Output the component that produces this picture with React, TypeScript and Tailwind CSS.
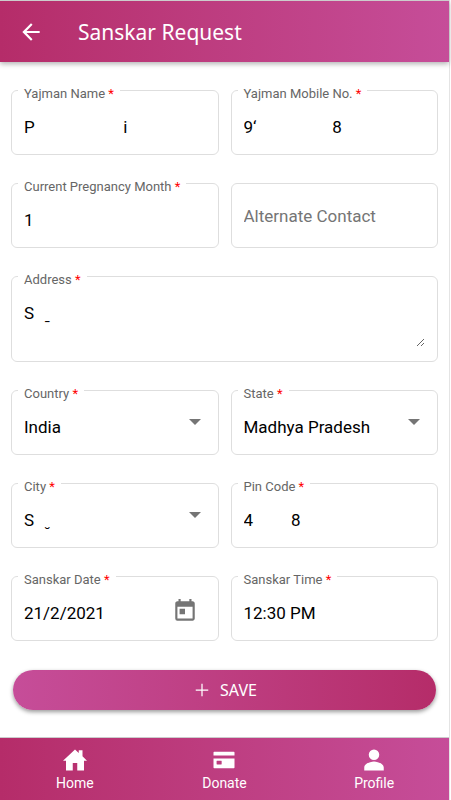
import React, { useState } from 'react';
import { IoAddSharp, IoCardSharp, IoHomeSharp, IoPersonSharp } from 'react-icons/io5';
import { MdArrowBack, MdToday } from 'react-icons/md';

interface FieldProps {
    id: string;
    label: string;
    children: React.ReactNode;
    className?: string;
}

const controlClass = 'block w-full min-w-0 bg-transparent text-[17px] leading-6 text-black outline-none';

// Keeps the blanked-out part of a value as wide as the hidden characters
const blank = (count: number) => '\u00a0'.repeat(count);

const Field: React.FC<FieldProps> = ({ id, label, children, className = 'h-[77px]' }) => (
    <fieldset className={`min-w-0 rounded-md border border-[#dedede] px-3 ${className}`}>
        <legend className="ml-[-6px] px-[6px] pt-2 text-[13px] leading-4 text-[#666]">
            <label htmlFor={id}>
                {label} <span className="text-[#f00]">*</span>
            </label>
        </legend>
        {children}
    </fieldset>
);

interface TextFieldProps {
    id: string;
    label: string;
    initial: string;
}

const TextField: React.FC<TextFieldProps> = ({ id, label, initial }) => {
    const [value, setValue] = useState(initial);

    return (
        <Field id={id} label={label}>
            <input
                id={id}
                type="text"
                value={value}
                onChange={(e) => setValue(e.target.value)}
                className={`${controlClass} mt-[13px]`}
            />
        </Field>
    );
};

const SelectField: React.FC<TextFieldProps> = ({ id, label, initial }) => (
    <Field id={id} label={label}>
        <div className="mt-[13px] grid items-start">
            <select
                id={id}
                defaultValue={initial}
                className={`${controlClass} col-start-1 row-start-1 appearance-none`}
            >
                <option value={initial}>{initial}</option>
            </select>
            <svg
                viewBox="0 0 12 6"
                className="pointer-events-none col-start-1 row-start-1 mt-1 mr-[5px] h-[6px] w-3 justify-self-end fill-[#757575]"
            >
                <path d="M0 0h12L6 6z" />
            </svg>
        </div>
    </Field>
);

const tabs = [
    { label: 'Home', icon: IoHomeSharp },
    { label: 'Donate', icon: IoCardSharp },
    { label: 'Profile', icon: IoPersonSharp },
];

export default function App() {
    const [address, setAddress] = useState(`S${blank(3)}\u0331`);

    return (
        <div className="bg-white pr-px font-[Roboto,sans-serif]">
            <div className="flex min-h-screen flex-col border-r border-[#e4e4e4]">
                {/* Header */}
                <header className="flex h-[62px] items-center border-t border-[#ccc] bg-linear-to-r from-[#b52c69] to-[#c64d99] px-[18px] text-white shadow-[0_2px_5px_rgba(0,0,0,0.3)]">
                    <button type="button" aria-label="Back" className="size-[26px]">
                        <MdArrowBack className="size-[26px]" />
                    </button>
                    <h1 className="ml-[34px] pt-px font-['Noto_Sans',sans-serif] text-[21px] leading-7">Sanskar Request</h1>
                </header>

                {/* Form */}
                <form className="flex-1 px-[11px] pt-4" onSubmit={(e) => e.preventDefault()}>
                    <div className="grid grid-cols-2 gap-x-3 gap-y-4">
                        <TextField id="name" label="Yajman Name" initial={`P${blank(21)}i`} />
                        <TextField id="mobile" label="Yajman Mobile No." initial={`9‘${blank(18)}8`} />
                        <TextField id="month" label="Current Pregnancy Month" initial="1" />
                        <div className="mt-3 flex h-[65px] items-center rounded-md border border-[#dedede] px-3">
                            <input
                                type="tel"
                                aria-label="Alternate Contact"
                                placeholder="Alternate Contact"
                                className={`${controlClass} placeholder:text-[#757575]`}
                            />
                        </div>
                        <Field id="address" label="Address" className="col-span-2 h-[98px]">
                            <textarea
                                id="address"
                                value={address}
                                onChange={(e) => setAddress(e.target.value)}
                                className={`${controlClass} mt-[13px] h-[46px] resize-y`}
                            />
                        </Field>
                        <SelectField id="country" label="Country" initial="India" />
                        <SelectField id="state" label="State" initial="Madhya Pradesh" />
                        <SelectField id="city" label="City" initial={`S${blank(3)}\u032e`} />
                        <TextField id="pin" label="Pin Code" initial={`4${blank(9)}8`} />
                        <Field id="date" label="Sanskar Date">
                            <div className="mt-[13px] flex h-6 items-center">
                                <input id="date" type="text" defaultValue="21/2/2021" className={controlClass} />
                                <button type="button" aria-label="Open calendar" className="mr-2 shrink-0 pb-1 text-[#757575]">
                                    <MdToday className="size-[26px]" />
                                </button>
                            </div>
                        </Field>
                        <TextField id="time" label="Sanskar Time" initial="12:30 PM" />
                    </div>

                    <div className="px-[2px] pt-[29px]">
                        <button
                            type="submit"
                            className="flex h-10 w-full items-center justify-center gap-2 rounded-full bg-linear-to-r from-[#c64d99] to-[#b52c69] font-['Noto_Sans',sans-serif] text-base text-white shadow-[0_2px_4px_rgba(0,0,0,0.4)]"
                        >
                            <IoAddSharp className="size-5" />
                            SAVE
                        </button>
                    </div>
                </form>

                {/* Bottom tabs */}
                <nav className="grid h-[63px] grid-cols-3 border-t border-[#ccc] bg-linear-to-r from-[#b52c69] to-[#c64d99] text-white">
                    {tabs.map(({ label, icon: Icon }) => (
                        <a key={label} href="#" className="flex flex-col items-center justify-center text-sm leading-4">
                            <Icon className="mb-[3px] size-6" />
                            {label}
                        </a>
                    ))}
                </nav>
            </div>
        </div>
    );
}
